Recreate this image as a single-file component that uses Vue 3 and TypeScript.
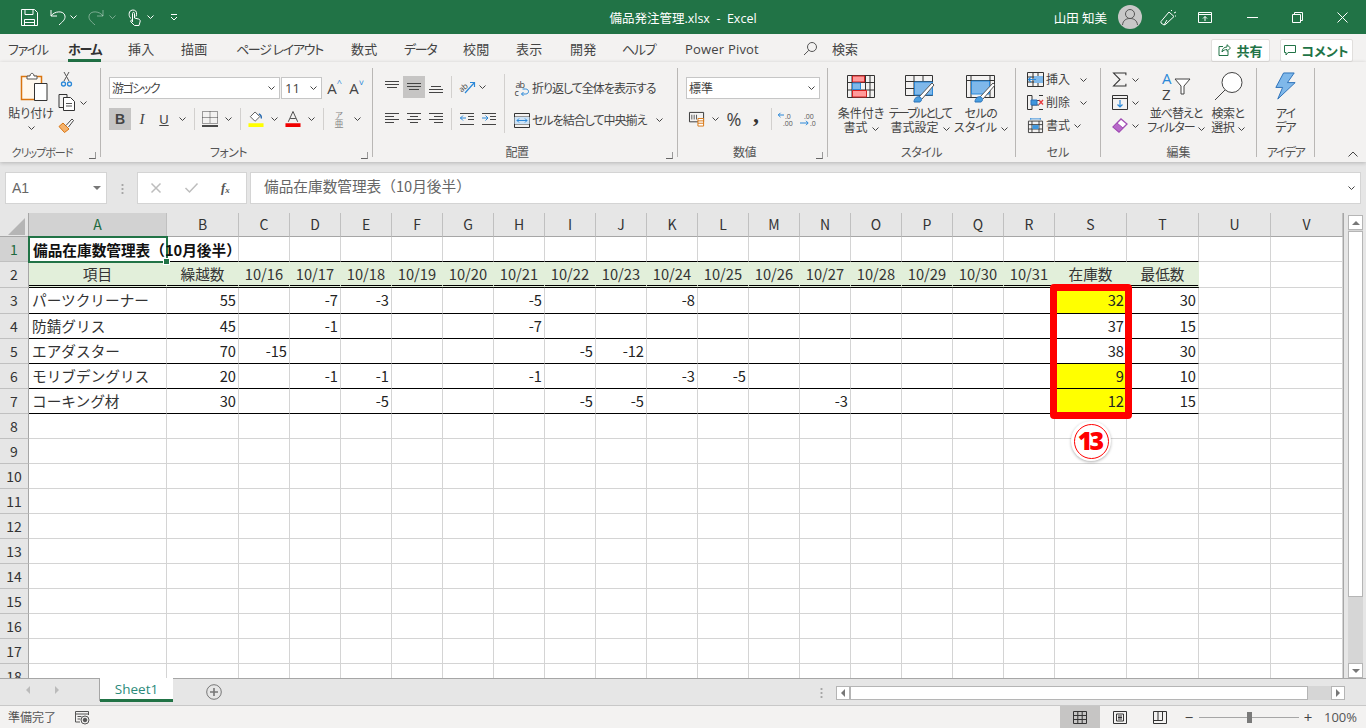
<script setup lang="ts">
import { h } from 'vue'

// small dropdown chevron used all over the ribbon
const Chev = () => h('svg', { class: 'chev', viewBox: '0 0 7 4' }, [h('path', { d: 'M.5.5 3.500 3.500 6.500.5' })])

// slot width of each ribbon tab, the kana ones are set tighter
const tabs = [
  { label: 'ファイル', w: 60, kana: true },
  { label: 'ホーム', w: 60, kana: true },
  { label: '挿入', w: 53 },
  { label: '描画', w: 55 },
  { label: 'ページ レイアウト', w: 115, kana: true },
  { label: '数式', w: 53 },
  { label: 'データ', w: 59, kana: true },
  { label: '校閲', w: 53 },
  { label: '表示', w: 54 },
  { label: '開発', w: 52 },
  { label: 'ヘルプ', w: 63, kana: true },
  { label: 'Power Pivot', w: 118 },
]
const letters = 'ABCDEFGHIJKLMNOPQRSTUV'.split('')
const dates = Array.from({ length: 16 }, (_, i) => `10/${16 + i}`)
const headRow = ['項目', '繰越数', ...dates, '在庫数', '最低数', '', '']

const items: { name: string; vals: Record<string, number> }[] = [
  { name: 'パーツクリーナー', vals: { B: 55, D: -7, E: -3, H: -5, K: -8, S: 32, T: 30 } },
  { name: '防錆グリス', vals: { B: 45, D: -1, H: -7, S: 37, T: 15 } },
  { name: 'エアダスター', vals: { B: 70, C: -15, I: -5, J: -12, S: 38, T: 30 } },
  { name: 'モリブデングリス', vals: { B: 20, D: -1, E: -1, H: -1, K: -3, L: -5, S: 9, T: 10 } },
  { name: 'コーキング材', vals: { B: 30, E: -5, I: -5, J: -5, N: -3, S: 12, T: 15 } },
]
const rowNums = Array.from({ length: 18 }, (_, i) => i + 1)

function cellText(row: number, col: number): string {
  if (row === 2) return headRow[col]
  const it = items[row - 3]
  if (!it) return ''
  if (col === 0) return it.name
  const v = it.vals[letters[col]]
  return v === undefined ? '' : String(v)
}
function cellClass(row: number, col: number) {
  const inTable = col < 20
  const low = col === 18 && (row === 3 || row === 6 || row === 7)
  return {
    head: row === 2 && inTable,
    'head-top': row === 1 && inTable,
    body: row >= 3 && row <= 7 && inTable,
    num: row >= 3 && row <= 7 && col > 0,
    name: row >= 3 && row <= 7 && col === 0,
    low,
  }
}
</script>

<template>
  <div class="app">
    <header class="titlebar">
      <div class="qat">
        <svg class="q-save" viewBox="0 0 17 17"><path d="M.5.5h13l3 3v13H.5zM4 .5v5h8v-5M3.500 16.500v-6h10v6M3.500 13.500h10"/></svg>
        <svg class="q-undo" viewBox="0 0 19 19"><path d="M2 2v6h6M2 8C5 3 15 2 16 8c.5 4-3 6-6 9"/></svg>
        <Chev class="light c1" />
        <svg class="q-redo" viewBox="0 0 19 19"><path d="M17 2v6h-6M17 8C14 3 4 2 3 8c-.5 4 3 6 6 9"/></svg>
        <Chev class="light dim c2" />
        <svg class="q-touch" viewBox="0 0 13 17"><path d="M3 9.500C.5 8 .5 2.500 3 1.500c2-1 5-.5 5.500 2 .3 1.500 0 3-.5 4"/><path d="M4.500 13V4.500c0-1.500 2-1.500 2 0V9l4 1c1.500.5 2 1.500 1.500 3l-1 3.500H6.500L3 13c-1-1.500 .5-2.500 1.500-1.500"/></svg>
        <Chev class="light c3" />
        <svg class="q-more" viewBox="0 0 8 7"><path d="M1 .5h6M1 3l3 3 3-3"/></svg>
      </div>
      <div class="doc-title">備品発注管理.xlsx &nbsp;-&nbsp; Excel</div>
      <div class="win">
        <span class="user">山田 知美</span>
        <span class="avatar">
          <svg viewBox="0 0 24 24"><circle cx="12" cy="9" r="4.500"/><path d="M4.500 20c.5-5 4-6.500 7.500-6.500s7 1.500 7.500 6.500"/></svg>
        </span>
        <svg class="w-pen" viewBox="0 0 17 17"><path d="M1 12.500 9 3l5 4.500L6 15l-2 1-3-2zM4 16l3-5M11 2l1-1M14 4l2-1M15 7l1 0"/></svg>
        <svg class="w-disp" viewBox="0 0 14 11"><path d="M.5.500h13v10H.5zM.5 2.500h13M7 9V4.500M5 6.500l2-2 2 2"/></svg>
        <svg class="w-min" viewBox="0 0 11 11"><path d="M0 5.500h11"/></svg>
        <svg class="w-max" viewBox="0 0 11 11"><path d="M.5 2.500h8v8h-8zM2.500 2.500v-2h8v8h-2"/></svg>
        <svg class="w-close" viewBox="0 0 11 11"><path d="M.5.500l10 10M10.500.500l-10 10"/></svg>
      </div>
    </header>

    <nav class="tabs">
      <div v-for="t in tabs" :key="t.label" class="tab" :style="{ width: t.w + 'px' }">
        <span :class="{ active: t.label === 'ホーム', kana: t.kana }">{{ t.label }}</span>
      </div>
      <svg class="t-search" viewBox="0 0 15 15"><circle cx="9" cy="6" r="4.500"/><path d="M5.800 9.300 1 14"/></svg>
      <span class="search-label">検索</span>
      <span class="spacer"></span>
      <button class="share">
        <svg viewBox="0 0 13 12"><path d="M5 2.500H1v9h9V7M4 8c0-3 2-5 5-5V.7L12.500 4 9 7.300V5.500C7 5.500 5 6.500 4 8z"/></svg>
        共有
      </button>
      <button class="share comment">
        <svg viewBox="0 0 12 11"><path d="M.5.500h11v7H4L2 10V7.500H.5z"/></svg>
        コメント
      </button>
    </nav>

    <section class="ribbon">
      <!-- クリップボード -->
      <div class="group g-clip">
        <div class="g-body">
          <div class="big paste">
            <svg class="ic-paste" viewBox="0 0 28 30">
              <path d="M1.500 4.500h20v23h-20z" fill="#fff8ee" stroke="#d9740f" stroke-width="1.500"/>
              <path d="M7 7V4h3c0-3.500 4-3.500 4 0h3v3z" fill="#fff" stroke="#555"/>
              <path d="M14.500 11.500h12.500v17H14.500z" fill="#fff" stroke="#333"/>
            </svg>
            <span class="bl">貼り付け</span>
            <Chev />
          </div>
          <div class="clip-col">
            <svg class="ic-cut" viewBox="0 0 11 16">
              <path d="M3 10 8 1M8 10 3 1" fill="none" stroke="#555"/>
              <circle cx="2.500" cy="13" r="2" fill="none" stroke="#2b88d8" stroke-width="1.300"/>
              <circle cx="8.500" cy="13" r="2" fill="none" stroke="#2b88d8" stroke-width="1.300"/>
            </svg>
            <div class="row-c">
              <svg class="ic-copy" viewBox="0 0 17 17">
                <path d="M5 13.500H1V.5h8v3" fill="none" stroke="#333"/>
                <path d="M5.500 3.500h7l4 4v9h-11z" fill="#fff" stroke="#333"/>
                <path d="M8 9.500h6M8 12h6" stroke="#555"/>
              </svg>
              <Chev />
            </div>
            <svg class="ic-brush" viewBox="0 0 17 16">
              <path d="M5 6 1 9.500l5.500 6L11 12z" fill="#f5b26b" stroke="#d9740f"/>
              <path d="M8 8.500 14 2l1.500 1.500-5 6.500" fill="#fff" stroke="#444"/>
            </svg>
          </div>
        </div>
        <div class="g-label lw"><span class="clip-t">クリップボード</span><i class="launch"></i></div>
      </div>

      <!-- フォント -->
      <div class="group g-font">
        <div class="g-body col">
          <div class="line l1">
            <div class="combo font-name"><span class="kana-s">游ゴシック</span><Chev /></div>
            <div class="combo font-size">11<Chev /></div>
            <span class="ib grow first-grow">A<sup class="up">^</sup></span>
            <span class="ib grow">A<sup class="dn">˅</sup></span>
          </div>
          <div class="line l2">
            <span class="ib on bold">B</span>
            <span class="ib it">I</span>
            <span class="ib und">U</span>
            <span class="cb"><Chev /></span>
            <i class="vs"></i>
            <span class="ib">
              <svg class="ic16" viewBox="0 0 16 16"><path d="M.5.5h15v12H.5zM8 .5v12M.5 6.500h15" stroke-dasharray="1 1" fill="none" stroke="#444"/><path d="M0 15h16" stroke="#111" stroke-width="1.500"/></svg>
            </span>
            <span class="cb"><Chev /></span>
            <i class="vs"></i>
            <span class="ib">
              <svg class="ic16" viewBox="0 0 16 17">
                <path d="M7 1 2 6l5 5 5-5z" fill="#fff" stroke="#555"/>
                <path d="M11 3c2 1 3 3 2.500 5" fill="none" stroke="#2b6cb0" stroke-width="1.500"/>
                <path d="M0 13h16v4H0z" fill="#ffff00"/>
              </svg>
            </span>
            <span class="cb"><Chev /></span>
            <span class="ib gap-l">
              <svg class="ic16" viewBox="0 0 16 17">
                <path d="M3 11.500 8 .5l5 11M5 8h6" fill="none" stroke="#444"/>
                <path d="M0 13h16v4H0z" fill="#f00000"/>
              </svg>
            </span>
            <span class="cb"><Chev /></span>
            <i class="vs"></i>
            <span class="ib phon"><small>ア</small><b>亜</b></span>
            <span class="cb"><Chev /></span>
          </div>
        </div>
        <div class="g-label lw">フォント<i class="launch"></i></div>
      </div>

      <!-- 配置 -->
      <div class="group g-align">
        <div class="g-body">
          <div class="al-left">
            <div class="line a1">
              <span class="ib"><svg class="ic14" viewBox="0 0 14 14"><path d="M0 1.500h14M0 4.500h14M2 7.500h10"/></svg></span>
              <span class="ib on"><svg class="ic14" viewBox="0 0 14 14"><path d="M0 3.500h14M0 6.500h14M2 9.500h10"/></svg></span>
              <span class="ib"><svg class="ic14" viewBox="0 0 14 14"><path d="M2 6.500h10M0 9.500h14M0 12.500h14"/></svg></span>
              <i class="vs al"></i>
              <span class="ib ori">
                <svg viewBox="0 0 16 14"><text x="0" y="10" transform="rotate(-40 5 8)" font-size="8" fill="#444">ab</text><path d="M6 13 15 3M11 2.500h4.500V7" fill="none" stroke="#2b88d8" stroke-width="1.200"/></svg>
              </span>
              <span class="cb pull"><Chev /></span>
            </div>
            <div class="line a2">
              <span class="ib"><svg class="ic14" viewBox="0 0 14 14"><path d="M0 1.500h14M0 4.500h9M0 7.500h14M0 10.500h9"/></svg></span>
              <span class="ib"><svg class="ic14" viewBox="0 0 14 14"><path d="M0 1.500h14M3 4.500h8M0 7.500h14M3 10.500h8"/></svg></span>
              <span class="ib"><svg class="ic14" viewBox="0 0 14 14"><path d="M0 1.500h14M5 4.500h9M0 7.500h14M5 10.500h9"/></svg></span>
              <i class="vs al"></i>
              <span class="ib">
                <svg class="ic14" viewBox="0 0 14 14"><path d="M0 1.500h14M8 4.500h6M8 7.500h6M0 12.500h14"/><path d="M6 6H0M3 3.500.5 6 3 8.500" stroke="#2b88d8"/></svg>
              </span>
              <span class="ib">
                <svg class="ic14" viewBox="0 0 14 14"><path d="M0 1.500h14M8 4.500h6M8 7.500h6M0 12.500h14"/><path d="M0 6h6M3.500 3.500 6 6 3.500 8.500" stroke="#2b88d8"/></svg>
              </span>
            </div>
          </div>
          <i class="vs tall"></i>
          <div class="al-right">
            <div class="wrapline">
              <svg class="ic-wrap" viewBox="0 0 15 15">
                <text x="1" y="6.500" font-size="9" fill="#444">ab</text>
                <text x="0" y="15" font-size="9" fill="#444">c</text>
                <path d="M7 13h4c4 0 4-5 0-5H8M9 11l-2 2 2 2" fill="none" stroke="#2b88d8"/>
              </svg>
              <span>折り返して全体を表示する</span>
            </div>
            <div class="wrapline merge">
              <svg class="ic-wrap" viewBox="0 0 16 15">
                <path d="M.5.5h15v14H.5zM.5 4h15M.5 11h15" fill="none" stroke="#333"/>
                <path d="M.5 4h15v7H.5z" fill="#cfe4f7"/>
                <path d="M3 7.500h10M5 5.500l-2 2 2 2M11 5.500l2 2-2 2" fill="none" stroke="#2b88d8"/>
              </svg>
              <span>セルを結合して中央揃え</span>
              <Chev />
            </div>
          </div>
        </div>
        <div class="g-label lw">配置<i class="launch"></i></div>
      </div>

      <!-- 数値 -->
      <div class="group g-num">
        <div class="g-body col">
          <div class="line l1"><div class="combo num-fmt">標準<Chev /></div></div>
          <div class="line l2 n2">
            <span class="ib">
              <svg class="ic16" viewBox="0 0 17 17">
                <path d="M.5 1.500h15v10H.5z" fill="none" stroke="#333"/>
                <path d="M3 4v5M5.500 4v5M8 4v5" stroke="#555"/>
                <path d="M9.500 8h6v8h-6zM9.500 10.500h6M9.500 13h6" fill="#fff" stroke="#d9740f"/>
              </svg>
            </span>
            <span class="cb"><Chev /></span>
            <span class="pct">%</span>
            <span class="comma">,</span>
            <i class="vs"></i>
            <span class="ib dec"><svg viewBox="0 0 18 15"><text x="7" y="6.500" font-size="7" fill="#555">.0</text><text x="5" y="14" font-size="7" fill="#555">.00</text><path d="M6 3H0M2.500 .8.300 3l2.200 2.200" fill="none" stroke="#2b88d8"/></svg></span>
            <span class="ib dec"><svg viewBox="0 0 18 15"><text x="4" y="6.500" font-size="7" fill="#555">.00</text><text x="10" y="14" font-size="7" fill="#555">.0</text><path d="M0 11h8M6 8.800 8.200 11 6 13.200" fill="none" stroke="#2b88d8"/></svg></span>
          </div>
        </div>
        <div class="g-label lw">数値<i class="launch"></i></div>
      </div>

      <!-- スタイル -->
      <div class="group g-style">
        <div class="g-body">
          <div class="big w56">
            <svg class="ic-cond" viewBox="0 0 28 23">
              <path d="M.5.5h27v22H.5zM.5 7.500h27M.5 15h27M5 .5v22M18.500.5v22M23 .5v22" fill="none" stroke="#333"/>
              <path d="M5.500 1h12v6h-12zM5.500 15.500h14v6.500h-14z" fill="#ff9a9a" stroke="#d42020"/>
              <path d="M5.500 8h8v6.500h-8z" fill="#7fb8ea" stroke="#2b88d8"/>
            </svg>
            <span class="bl">条件付き</span>
            <span class="bl">書式 <Chev /></span>
          </div>
          <div class="big w62">
            <svg class="ic-big" viewBox="0 0 30 28">
              <path d="M.5.5h27v20H.5zM.5 6.500h27M.5 13.500h27M9 .5v20M18 .5v20" fill="none" stroke="#333"/>
              <path d="M9.500 7h18v13h-18z" fill="#7fb8ea" stroke="#2b88d8"/>
              <path d="M14 22 27 8l2 2-12 14" fill="#fff" stroke="#555"/>
              <path d="M9 27c0-4 3-6 6-5 2 1 2 4 0 5z" fill="#4a9fe0" stroke="#2b70b8"/>
            </svg>
            <span class="bl tighter">テーブルとして</span>
            <span class="bl">書式設定 <Chev /></span>
          </div>
          <div class="big w60">
            <svg class="ic-big" viewBox="0 0 30 28">
              <path d="M.5.5h28v22H.5zM.5 5.500h28M5 .5v22M24 .5v22" fill="none" stroke="#333"/>
              <path d="M5.500 6h18v13h-18z" fill="#7fb8ea" stroke="#2b88d8"/>
              <path d="M14 22 27 8l2 2-12 14" fill="#fff" stroke="#555"/>
              <path d="M9 27c0-4 3-6 6-5 2 1 2 4 0 5z" fill="#4a9fe0" stroke="#2b70b8"/>
            </svg>
            <span class="bl semi">セルの</span>
            <span class="bl">スタイル <Chev /></span>
          </div>
        </div>
        <div class="g-label semi">スタイル</div>
      </div>

      <!-- セル -->
      <div class="group g-cell">
        <div class="g-body col">
          <div class="cell-row">
            <svg class="ic-cell" viewBox="0 0 17 15">
              <path d="M.5.5h16v14H.5zM.5 5h16M.5 10h16M6 .5v14M11 .5v14" fill="none" stroke="#333"/>
              <path d="M7 4h9v7H7z" fill="#7fb8ea"/>
              <path d="M9 7.500H1.500M4 5 1.500 7.500 4 10" fill="none" stroke="#2b88d8" stroke-width="1.200"/>
            </svg>
            <span>挿入</span><Chev />
          </div>
          <div class="cell-row">
            <svg class="ic-cell" viewBox="0 0 17 15">
              <path d="M.5.5H5v5h7M.5 14.500H5V10h7M.5.5v14M12 .5h4M12 14.500h4" fill="none" stroke="#333"/>
              <path d="M4 5h6v5H4z" fill="#3f97de" stroke="#2b70b8"/>
              <path d="M12 5l4 4.500M16 5l-4 4.500" stroke="#e8393c" stroke-width="1.300"/>
            </svg>
            <span>削除</span><Chev />
          </div>
          <div class="cell-row short">
            <svg class="ic-cell" viewBox="0 0 17 17">
              <path d="M3 1h11M3 0v2M14 0v2" stroke="#2b88d8" fill="none"/>
              <path d="M.5 3.500h16v13H.5zM.5 7.500h16M.5 12.500h16M4.500 3.500v13M12.500 3.500v13" fill="none" stroke="#333"/>
              <path d="M5 8h7v4.500H5z" fill="#3f97de"/>
            </svg>
            <span>書式</span><Chev />
          </div>
        </div>
        <div class="g-label">セル</div>
      </div>

      <!-- 編集 -->
      <div class="group g-edit">
        <div class="g-body">
          <div class="edit-col">
            <div class="cell-row"><svg class="ic-edit" viewBox="0 0 14 14"><path d="M12.500 3V1H1l6 6-6 6h11.500v-2" fill="none" stroke="#333"/></svg><Chev /></div>
            <div class="cell-row"><svg class="ic-edit" viewBox="0 0 16 15"><path d="M.5.5h15v14H.5zM.5 3.500h15" fill="none" stroke="#333"/><path d="M8 5v7M5.500 9.500 8 12l2.500-2.500" fill="none" stroke="#2b88d8" stroke-width="1.200"/></svg><Chev /></div>
            <div class="cell-row"><svg class="ic-edit" viewBox="0 0 16 15"><path d="M1 9 9 1l6 5-8 8z" fill="#fff" stroke="#a24fb5" stroke-width="1.300"/><path d="M1 9 5 5l6 5-4 4z" fill="#b768c9" stroke="#a24fb5"/></svg><Chev /></div>
          </div>
          <div class="big w58">
            <svg class="ic-sort" viewBox="0 0 29 28">
              <text x="0" y="12" font-size="15" fill="#2b88d8">A</text>
              <text x="0" y="28" font-size="15" fill="#444">Z</text>
              <path d="M13 7h15l-6 7v8h-3v-8z" fill="#fff" stroke="#444"/>
            </svg>
            <span class="bl tight">並べ替えと</span>
            <span class="bl tight">フィルター <Chev /></span>
          </div>
          <div class="big w46">
            <svg class="ic-sort" viewBox="0 0 29 28"><circle cx="18" cy="10.500" r="10" fill="#fff" stroke="#444"/><path d="M11 18 1 28" stroke="#444" fill="none"/></svg>
            <span class="bl semi">検索と</span>
            <span class="bl semi">選択 <Chev /></span>
          </div>
        </div>
        <div class="g-label">編集</div>
      </div>

      <!-- アイデア -->
      <div class="group g-idea">
        <div class="g-body">
          <div class="big wfull">
            <svg class="ic-sort" viewBox="0 0 24 29"><path d="M10 1h11l-7 10h8L4 28l5-12H2z" fill="#7fb8ea" stroke="#2b70b8"/></svg>
            <span class="bl tight">アイ</span>
            <span class="bl tight">デア</span>
          </div>
        </div>
        <div class="g-label idea-t">アイデア</div>
      </div>

      <div class="rib-end">
        <svg class="collapse" viewBox="0 0 10 6"><path d="M.5 5.500 5 1l4.500 4.500"/></svg>
      </div>
    </section>

    <div class="formula">
      <div class="namebox">A1<i class="tri"></i></div>
      <div class="dots"></div>
      <div class="fbtns">
        <svg viewBox="0 0 10 10"><path d="M.5.500l9 9M9.500.500l-9 9"/></svg>
        <svg viewBox="0 0 13 10"><path d="M.5 5 4.500 9 12.500.5"/></svg>
        <span class="fx">f<sub>x</sub></span>
      </div>
      <div class="finput">
        <span class="ftext">備品在庫数管理表（10月後半）</span>
        <Chev />
      </div>
    </div>

    <div class="sheet-area">
      <div class="sheet">
        <div class="corner"><i></i></div>
        <div v-for="(l, i) in letters" :key="l" class="colh" :class="{ sel: i === 0 }">{{ l }}</div>
        <template v-for="r in rowNums" :key="r">
          <div class="rowh" :class="{ sel: r === 1 }">{{ r }}</div>
          <div
            v-for="(l, c) in letters"
            :key="l"
            class="cell"
            :class="[cellClass(r, c), { first: r === 1 && c === 0 }]"
          >
            <template v-if="r === 1 && c === 0">
              <span class="a1text">備品在庫数管理表（10月後半）</span>
              <i class="handle"></i>
            </template>
            <template v-else>{{ cellText(r, c) }}</template>
          </div>
        </template>
        <div class="redbox"></div>
        <div class="badge"><span>13</span></div>
      </div>
      <div class="vscroll">
        <div class="sb-btn"><i class="tu"></i></div>
        <div class="vthumb"></div>
        <div class="sb-btn bottom"><i class="td"></i></div>
      </div>
    </div>

    <div class="sheetbar">
      <div class="nav"><i class="tl"></i><i class="tr"></i></div>
      <div class="sheet-tab">Sheet1</div>
      <svg class="add" viewBox="0 0 16 16"><circle cx="8" cy="8" r="7.300"/><path d="M4 8h8M8 4v8" stroke-width="1.600"/></svg>
      <span class="spacer"></span>
      <div class="dots h"></div>
      <div class="hscroll">
        <div class="sb-btn"><i class="tl dark"></i></div>
        <div class="hthumb"></div>
        <div class="sb-btn end"><i class="tr dark"></i></div>
      </div>
    </div>

    <footer class="status">
      <span class="ready">準備完了</span>
      <svg class="macro" viewBox="0 0 15 15"><path d="M.5 1.500h13M.5 4h13M.5 1.500V12H5M13.500 1.500V5M2.500 6.500h4M2.500 9h3"/><circle cx="10" cy="10" r="4"/><circle cx="10" cy="10" r="1.800" fill="#555"/></svg>
      <span class="spacer"></span>
      <span class="view on"><svg viewBox="0 0 14 13"><path d="M.5.500h13v12H.5zM.5 4.500h13M.5 8.500h13M4.800.5v12M9.200.5v12"/></svg></span>
      <span class="view"><svg viewBox="0 0 14 13"><path d="M.5.500h13v12H.5zM3.500 3h7v7h-7zM5 5h4M5 6.500h4M5 8h4"/></svg></span>
      <span class="view"><svg viewBox="0 0 14 13"><path d="M.5.500h13v12H.5zM.5 9.500h9V.5M5 .5v9"/></svg></span>
      <span class="zm">−</span>
      <div class="slider"><i></i></div>
      <span class="zm">+</span>
      <span class="pct100">100%</span>
    </footer>
  </div>
</template>

<style scoped>
.app { width:1366px; height:728px; overflow:hidden; display:flex; flex-direction:column; background:#e6e6e6; color:#444; font-family:"Open Sans","Noto Sans CJK JP",sans-serif; font-size:12px; font-feature-settings:"palt" }
svg { display:block; flex:none; overflow:visible }
i { display:block; font-style:normal }
.spacer { flex:1 }
.chev { width:7px; height:4px; fill:none; stroke:#444; display:inline-block; vertical-align:middle; flex:none }
.chev.light { stroke:#fff }
.chev.light.dim { opacity:.4 }
.chev.c1 { margin-left:2px }
.chev.c2 { margin-left:3.500px }
.chev.c3 { margin-left:6.500px }

.titlebar { height:34px; flex:none; background:#217346; color:#fff; display:flex; align-items:center; position:relative }
.qat { display:flex; align-items:center; padding-left:21px }
.qat svg:not(.chev) { fill:none; stroke:#fff }
.q-save { width:17px; height:17px }
.q-undo { width:19px; height:19px; margin-left:11px }
.q-redo { width:19px; height:19px; margin-left:9px; opacity:.4 }
.q-touch { width:13px; height:17px; margin-left:12px }
.q-more { width:8px; height:7px; margin-left:15.500px }
.doc-title { position:absolute; left:0; right:0; text-align:center; font-size:12.500px; color:#fff; pointer-events:none }
.win { margin-left:auto; display:flex; align-items:center; position:relative }
.win svg { fill:none; stroke:#fff }
.user { font-size:12.500px; margin-right:11px }
.avatar { width:24px; height:24px; border-radius:50%; background:#c8c8c8; display:flex }
.avatar svg { width:24px; height:24px; stroke:#555 }
.w-pen { width:17px; height:17px; margin-left:18px }
.w-disp { width:14px; height:11px; margin-left:21px }
.w-min { width:11px; height:11px; margin-left:35px }
.w-max { width:11px; height:11px; margin-left:34px }
.w-close { width:11px; height:11px; margin:0 18px 0 34px }

.tabs { height:28px; flex:none; background:#f3f2f1; display:flex; align-items:center; padding-left:8px; font-size:13px; color:#444 }
.tab { height:28px; line-height:30px; white-space:nowrap; flex:none; letter-spacing:.2px }
.tab span { display:inline-block; height:28px; position:relative }
.tab .kana { letter-spacing:-1.300px }
.tab .active { font-weight:700; color:#333 }
.tab .active::after { content:""; position:absolute; left:0; right:0; bottom:0; height:3px; background:#217346 }
.t-search { width:15px; height:15px; fill:none; stroke:#555 }
.search-label { margin-left:14px }
.share { width:59px; height:23px; margin:4px 0 0 0; border:1px solid #e1dfdd; border-radius:2px; background:#fff; color:#217346; font:700 13px "Noto Sans CJK JP",sans-serif; font-feature-settings:"palt"; display:flex; align-items:center; justify-content:center; gap:5px; padding:0 }
.share svg { width:13px; height:12px; fill:none; stroke:#217346 }
.comment { width:73px; margin:4px 13px 0 10px }
.comment svg { width:12px; height:11px }

.ribbon { height:100px; flex:none; background:#f3f2f1; display:flex; box-shadow:0 1px 4px rgba(0,0,0,.22); position:relative; z-index:1 }
.group { margin-top:6px; height:89px; border-right:1px solid #b9b7b5; display:flex; flex-direction:column; flex:none; box-sizing:border-box }
.g-body { height:77px; display:flex; flex:none }
.g-body.col { flex-direction:column }
.g-label { flex:1; position:relative; text-align:center; font-size:12px; line-height:15px; color:#555; white-space:nowrap }
.g-label.lw { padding-right:16px; letter-spacing:-.5px }
.clip-t { font-size:11px; letter-spacing:-1px }
.idea-t { letter-spacing:-1.500px }
.launch { position:absolute; right:4px; bottom:1px; width:6px; height:6px; border-left:1px solid #999; border-bottom:1px solid #666; transform:scaleX(-1) }
.g-clip { width:101px }
.g-font { width:272px }
.g-align { width:305px }
.g-num { width:150px }
.g-style { width:188px }
.g-cell { width:85px }
.g-edit { width:156px }
.g-idea { width:58px }
.rib-end { flex:1; display:flex; justify-content:flex-end; align-items:flex-end; padding:0 8px 5px 0 }
.collapse { width:10px; height:6px; fill:none; stroke:#444 }

.big { display:flex; flex-direction:column; align-items:center; padding-top:4px; box-sizing:border-box; flex:none }
.bl { line-height:14px; white-space:nowrap; color:#444 }
.bl .chev { margin-left:1px }
.tight { letter-spacing:-1px }
.tighter { letter-spacing:-1.800px }
.semi { letter-spacing:-.5px }
.paste { width:42px; margin-left:10px }
.ic-paste { width:28px; height:30px; margin:0 0 5px 5px }
.paste .chev { margin-top:5px }
.clip-col { width:40px; padding:3px 0 0 6px; display:flex; flex-direction:column; box-sizing:content-box }
.ic-cut { width:11px; height:16px; margin-left:3px }
.row-c { display:flex; align-items:center; gap:5px; margin-top:7px }
.ic-copy { width:17px; height:17px }
.ic-brush { width:17px; height:16px; margin-top:6px }

.line { display:flex; align-items:center; height:22px; flex:none }
.l1 { margin:9px 0 0 8px }
.l2 { margin:9px 0 0 8px }
.combo { height:22px; box-sizing:border-box; background:#fff; border:1px solid #c6c6c6; display:flex; align-items:center; justify-content:space-between; padding:0 4px 0 2px; font-size:12px; color:#444 }
.kana-s { letter-spacing:-1.500px }
.font-name { width:171px }
.font-size { width:41px; margin-left:1px; padding-left:3px; font-size:13px }
.num-fmt { width:134px }
.ib { width:22px; height:22px; display:flex; align-items:center; justify-content:center; flex:none; font-size:14px; color:#444; position:relative }
.ib.on { background:#c6c5c4 }
.cb { width:14px; display:flex; align-items:center; justify-content:center; flex:none }
.cb.pull { margin-left:-3px }
.vs { width:1px; height:22px; background:#d2d0ce; margin:0 4px 0 5px; flex:none }
.vs.al { margin-left:4px }
.bold { font-weight:700; font-family:"Liberation Sans",sans-serif }
.it { font-style:italic; font-family:"Liberation Serif",serif; font-size:15px }
.und { text-decoration:underline; font-family:"Liberation Sans",sans-serif; font-size:13px }
.grow { font-size:15px; font-family:"Open Sans",sans-serif }
.first-grow { margin-left:-1px }
.grow sup { font-size:9px; color:#2b88d8; position:absolute; right:1px; top:0; line-height:12px }
.ic16 { width:16px; height:16px }
.gap-l { margin-left:1px }
.phon { flex-direction:column; line-height:10px; font-size:9px; color:#888 }
.phon small { font-size:8px; line-height:9px }
.phon b { font-weight:400 }
.ic14 { width:14px; height:14px; fill:none; stroke:#444 }
.al-left { padding-left:8px; width:124px; flex:none; box-sizing:content-box }
.a1 { margin-top:8px }
.a2 { margin-top:10px }
.ori svg { width:16px; height:14px }
.vs.tall { height:59px; margin:6px 4px 0 -1px }
.al-right { display:flex; flex-direction:column; padding-left:5px }
.wrapline { display:flex; align-items:center; gap:1px; height:22px; margin-top:9px; white-space:nowrap; color:#444; letter-spacing:-1px }
.merge { margin-top:10px }
.merge .chev { margin-left:9px }
.ic-wrap { width:16px; height:15px; margin-right:1px }
.n2 { margin-left:8px }
.pct { font-size:18px; width:24px; text-align:center; line-height:22px; color:#444; font-family:"Open Sans",sans-serif }
.comma { font-size:24px; width:20px; text-align:center; font-weight:700; line-height:12px; height:22px; color:#333; font-family:"Liberation Serif",serif }
.dec svg { width:18px; height:15px }
.ic-cond { width:28px; height:23px; margin:3px 0 9px }
.ic-big { width:30px; height:28px; margin:3px 0 4px }
.w56 { width:56px; margin-left:5px }
.w62 { width:62px }
.w60 { width:60px }
.w58 { width:58px }
.w46 { width:46px }
.wfull { width:100% }
.cell-row { height:23px; display:flex; align-items:center; white-space:nowrap; flex:none; line-height:21px }
.g-cell .cell-row { padding-left:11px }
.g-cell .cell-row span { margin-left:2px }
.g-cell .cell-row .chev { margin-left:10px }
.g-cell .cell-row.short .chev { margin-left:4px }
.ic-cell { width:17px; height:15px }
.edit-col { width:46px; padding-left:11px; box-sizing:border-box; flex:none }
.edit-col .chev { margin-left:4px }
.ic-edit { width:16px; height:15px }
.ic-sort { width:29px; height:28px; margin-bottom:7px }

.formula { height:32px; margin-top:10px; margin-bottom:9px; flex:none; display:flex; align-items:stretch; color:#666 }
.namebox { width:102px; margin-left:5px; box-sizing:border-box; background:#fff; border:1px solid #d4d4d4; display:flex; align-items:center; justify-content:space-between; padding:0 5px 0 6px; font-size:14px; color:#666; font-family:"Liberation Sans",sans-serif }
.tri { width:0; height:0; border:4px solid transparent; border-top:4px solid #777; border-bottom:0 }
.dots { width:3px; height:11px; margin:11px 13px 0 14px; background:radial-gradient(circle,#a6a6a6 1px,transparent 1.200px) 0 0/3px 4px }
.fbtns { width:110px; box-sizing:border-box; background:#fff; border:1px solid #d4d4d4; display:flex; align-items:center; padding-left:13px }
.fbtns svg { fill:none; stroke:#bdbdbd; stroke-width:1.500 }
.fbtns svg:first-child { width:10px; height:10px }
.fbtns svg:nth-child(2) { width:13px; height:10px; margin-left:24px }
.fx { margin-left:23px; font:italic 700 13px "Liberation Serif",serif; color:#555 }
.fx sub { font-size:9px; vertical-align:-1px }
.finput { flex:1; margin:0 5px 0 3px; box-sizing:border-box; background:#fff; border:1px solid #d4d4d4; display:flex; align-items:center; justify-content:space-between; padding:0 5px 0 13px; font:14.670px "Noto Sans CJK JP",sans-serif; font-feature-settings:normal; color:#666 }
.ftext { position:relative; top:-3px }

.sheet-area { height:465px; flex:none; display:flex; overflow:hidden }
.sheet { width:1343px; height:465px; flex:none; display:grid; grid-template-columns:29px 138px 72px repeat(16,51px) 72px 72px 72px 72px; grid-template-rows:24px 25px 26px 26px repeat(15,25px); background:#fff; position:relative; overflow:hidden; font:14.670px "Noto Sans CJK JP",sans-serif; font-feature-settings:normal; color:#222; border-right:1px solid #a6a6a6; box-sizing:content-box }
.corner { background:#e6e6e6; border-right:1px solid #a6a6a6; border-bottom:1px solid #a6a6a6; box-sizing:border-box; padding:5px 0 0 8px }
.corner i { width:0; height:0; border-style:solid; border-width:0 0 17px 17px; border-color:transparent transparent #b5b5b5 transparent }
.colh { background:#e6e6e6; border-right:1px solid #c0c0c0; border-bottom:1px solid #a6a6a6; box-sizing:border-box; text-align:center; line-height:23px; color:#333; font-size:14px }
.colh.sel { background:#d2d2d2; color:#1d6a40 }
.rowh { background:#e6e6e6; border-right:1px solid #a6a6a6; border-bottom:1px solid #c0c0c0; box-sizing:border-box; text-align:center; line-height:24px; color:#333; font-size:14px }
.rowh.sel { background:#d2d2d2; color:#1d6a40 }
.cell { border-right:1px solid #d4d4d4; border-bottom:1px solid #d4d4d4; box-sizing:border-box; line-height:24px; white-space:nowrap; min-width:0; overflow:hidden }
.cell.head-top { border-bottom:1px solid #000 }
.cell.head { background:#e2efda; border-right-color:#e2efda; border-bottom:3px double #000; text-align:center; line-height:24px; color:#333 }
.cell.body { border-bottom:1px solid #000 }
.cell.num { text-align:right; padding-right:2px }
.cell.name { padding-left:3px; color:#333 }
.cell.low { background:#ffff00 }
.cell.first { overflow:visible; position:relative; z-index:2; border:2px solid #217346; margin:-1px; line-height:24px }
.a1text { font-weight:700; color:#111; padding-left:3px }
.handle { position:absolute; right:-4px; bottom:-4px; width:5px; height:5px; background:#217346; border:1px solid #fff }
.redbox { position:absolute; left:1050px; top:71px; width:82px; height:135px; box-sizing:border-box; border:7px solid #ff0000; border-radius:4px; z-index:3 }
.badge { position:absolute; left:1071px; top:208px; width:40px; height:40px; border-radius:50%; background:#fff; box-shadow:0 1px 3px rgba(0,0,0,.3); display:flex; align-items:center; justify-content:center; z-index:3 }
.badge span { width:35px; height:35px; box-sizing:border-box; border:1.500px solid #ff0000; border-radius:50%; color:#ff0000; font:800 25px/31px "Open Sans",sans-serif; letter-spacing:-3px; text-align:center; padding-right:3px }

.vscroll { width:15px; margin:2px 0 0 4px; height:463px; background:#d6d6d6; display:flex; flex-direction:column; flex:none }
.sb-btn { width:15px; height:15px; background:#fff; border:1px solid #b5b5b5; box-sizing:border-box; display:flex; align-items:center; justify-content:center; flex:none }
.sb-btn.bottom { margin-top:auto }
.vthumb { height:366px; background:#fff; border:1px solid #b5b5b5; box-sizing:border-box; margin-top:1px; flex:none }
.tu,.td,.tl,.tr { width:0; height:0; border:4px solid transparent }
.tu { border-top:0; border-bottom-color:#777 }
.td { border-bottom:0; border-top-color:#777 }
.tl { border-left:0; border-right-color:#bbb }
.tr { border-right:0; border-left-color:#bbb }
.tl.dark { border-right-color:#777 }
.tr.dark { border-left-color:#777 }

.sheetbar { height:28px; flex:none; display:flex; align-items:flex-start; background:#e6e6e6; border-top:1px solid #a6a6a6; border-bottom:1px solid #c8c8c8; box-sizing:border-box; color:#217346 }
.nav { width:100px; height:22px; display:flex; align-items:center; padding-left:26px; gap:25px; box-sizing:border-box; border-right:1px solid #a6a6a6; flex:none }
.sheet-tab { width:73px; height:24px; margin-top:-1px; background:#fff; box-sizing:border-box; border-bottom:3px solid #217346; text-align:center; font:13.500px/23px "Open Sans",sans-serif; color:#2a8a7a; flex:none }
.add { width:16px; height:16px; margin:5px 0 0 33px; fill:none; stroke:#777 }
.dots.h { margin:8px 13px 0 0 }
.hscroll { display:flex; width:509px; margin:7px 21px 0 0; background:#d6d6d6; flex:none; height:14px }
.hscroll .sb-btn { height:14px; width:14px }
.hthumb { width:458px; height:14px; background:#fff; border:1px solid #b5b5b5; box-sizing:border-box; flex:none }
.sb-btn.end { margin-left:auto }

.status { height:22px; flex:none; background:#f3f2f1; display:flex; align-items:center; color:#555 }
.ready { margin-left:8px; font-size:12px }
.macro { width:15px; height:15px; margin-left:19px; fill:none; stroke:#555 }
.view { width:40px; height:22px; display:flex; align-items:center; justify-content:center; flex:none }
.view.on { background:#c6c5c4 }
.view svg { width:14px; height:13px; fill:none; stroke:#333 }
.zm { width:10px; margin-left:4px; text-align:center; font-size:15px; color:#444 }
.slider { width:100px; height:1px; background:#a6a6a6; position:relative; margin:0 0 0 5px }
.slider i { position:absolute; left:48px; top:-5px; width:5px; height:11px; background:#7a7a7a }
.pct100 { margin:0 9px 0 11px; font-size:13px; color:#555 }
</style>

<style>
html, body { margin:0; padding:0; background:#e6e6e6 }
</style>
